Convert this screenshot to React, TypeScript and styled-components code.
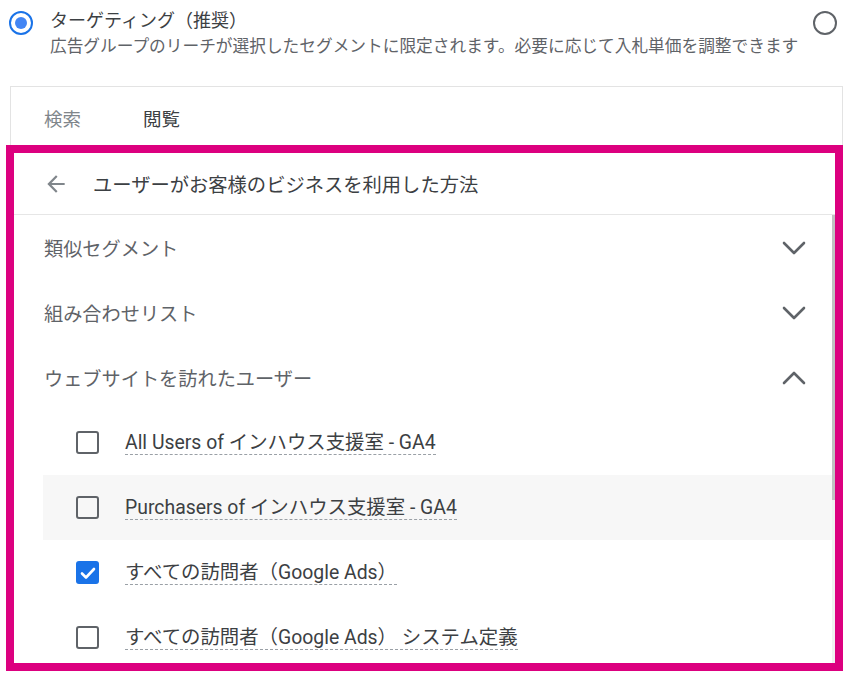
import React from 'react';
import styled, { createGlobalStyle } from 'styled-components';

const GlobalStyle = createGlobalStyle`
    html, body {
        margin: 0;
        padding: 0;
        background: #ffffff;
    }
    body {
        font-family: Roboto, "Noto Sans CJK JP", sans-serif;
        color: #3c4043;
    }
`;

const Page = styled.div`
    width: 850px;
    height: 677px;
    overflow: hidden;
    display: flex;
    flex-direction: column;
`;

const OptionRow = styled.div`
    display: flex;
    align-items: flex-start;
    padding: 10px 13px 0 9px;
    height: 86px;
    flex: none;
    box-sizing: border-box;
`;

const Radio = styled.span<{ checked?: boolean }>`
    flex: none;
    width: 24px;
    height: 24px;
    box-sizing: border-box;
    border-radius: 50%;
    border: 2.5px solid ${({ checked }) => (checked ? '#1a73e8' : '#5f6368')};
    display: flex;
    align-items: center;
    justify-content: center;
    margin-top: 1px;

    &::after {
        content: '';
        width: 12px;
        height: 12px;
        border-radius: 50%;
        background: ${({ checked }) => (checked ? '#4285f4' : 'transparent')};
    }
`;

const OptionText = styled.div`
    flex: 1;
    padding-left: 17px;
`;

const OptionTitle = styled.div`
    font-size: 18px;
    line-height: 22px;
    color: #3c4043;
`;

const OptionDesc = styled.div`
    font-size: 16.7px;
    line-height: 22px;
    margin-top: 4px;
    color: #5f6368;
    white-space: nowrap;
`;

const TabPanel = styled.div`
    flex: none;
    margin-left: 10px;
    width: 833px;
    height: 59px;
    box-sizing: border-box;
    border: 1px solid #e3e3e3;
    border-bottom: none;
    display: flex;
    align-items: center;
    padding: 0 0 0 33px;
    gap: 62px;
`;

const Tab = styled.span<{ active?: boolean }>`
    font-size: 18.5px;
    color: ${({ active }) => (active ? '#3c4043' : '#80868b')};
    padding-top: 3px;
`;

const Highlight = styled.div`
    flex: none;
    margin-left: 6px;
    width: 837px;
    height: 526px;
    box-sizing: border-box;
    border: 8px solid #dc007f;
    display: flex;
    flex-direction: column;
    background: #ffffff;
`;

const Header = styled.div`
    flex: none;
    height: 62px;
    box-sizing: border-box;
    border-bottom: 1px solid #e6e6e6;
    display: flex;
    align-items: center;
    padding-left: 29px;
    gap: 24px;
`;

const HeaderTitle = styled.span`
    font-size: 19.3px;
    color: #3c4043;
`;

const ListArea = styled.div`
    flex: 1;
    display: flex;
    min-height: 0;
`;

const List = styled.div`
    flex: 1;
    overflow: hidden;
`;

const Scrollbar = styled.div`
    flex: none;
    width: 3px;
    background: #f1f1f1;
`;

const Thumb = styled.div`
    height: 285px;
    background: #c1c1c1;
`;

const SectionRow = styled.div`
    height: 65px;
    display: flex;
    align-items: center;
    justify-content: space-between;
    padding: 0 26px 0 30px;
`;

const SectionLabel = styled.span`
    font-size: 19.2px;
    color: #5f6368;
`;

const ItemRow = styled.div<{ hovered?: boolean }>`
    height: 65px;
    margin-left: 29px;
    display: flex;
    align-items: center;
    padding-left: 33px;
    gap: 26px;
    background: ${({ hovered }) => (hovered ? '#f7f7f7' : 'transparent')};
`;

const Checkbox = styled.span<{ checked?: boolean }>`
    flex: none;
    width: 23px;
    height: 23px;
    box-sizing: border-box;
    border-radius: 3px;
    border: ${({ checked }) => (checked ? 'none' : '2.5px solid #5f6368')};
    background: ${({ checked }) => (checked ? '#1a73e8' : 'transparent')};
    display: flex;
    align-items: center;
    justify-content: center;
`;

const ItemLabel = styled.span`
    font-size: 19.4px;
    line-height: 23px;
    color: #3c4043;
    border-bottom: 1px dashed #9aa0a6;
    white-space: nowrap;
`;

const Chevron: React.FC<{ up?: boolean }> = ({ up }) => (
    <svg width="24" height="14" viewBox="0 0 24 14" aria-hidden>
        <polyline
            points={up ? '2,12 12,2 22,12' : '2,2 12,12 22,2'}
            fill="none"
            stroke="#5f6368"
            strokeWidth="2.6"
            strokeLinecap="round"
            strokeLinejoin="round"
        />
    </svg>
);

const BackArrow = () => (
    <svg width="26" height="26" viewBox="0 0 24 24" aria-hidden>
        <path d="M20 11H7.83l5.59-5.59L12 4l-8 8 8 8 1.41-1.41L7.83 13H20v-2z" fill="#80868b" />
    </svg>
);

const CheckMark = () => (
    <svg width="18" height="18" viewBox="0 0 18 18" aria-hidden>
        <polyline
            points="3,9.5 7,13.5 15,5"
            fill="none"
            stroke="#ffffff"
            strokeWidth="2.6"
            strokeLinecap="round"
            strokeLinejoin="round"
        />
    </svg>
);

const SECTIONS = [
    { label: '類似セグメント', open: false },
    { label: '組み合わせリスト', open: false },
    { label: 'ウェブサイトを訪れたユーザー', open: true },
];

const ITEMS = [
    { label: 'All Users of インハウス支援室 - GA4', checked: false },
    { label: 'Purchasers of インハウス支援室 - GA4', checked: false, hovered: true },
    { label: 'すべての訪問者（Google Ads）', checked: true },
    { label: 'すべての訪問者（Google Ads） システム定義', checked: false },
];

const App: React.FC = () => (
    <>
        <GlobalStyle />
        <Page>
            <OptionRow>
                <Radio checked />
                <OptionText>
                    <OptionTitle>ターゲティング（推奨）</OptionTitle>
                    <OptionDesc>
                        広告グループのリーチが選択したセグメントに限定されます。必要に応じて入札単価を調整できます
                    </OptionDesc>
                </OptionText>
                <Radio />
            </OptionRow>

            <TabPanel>
                <Tab>検索</Tab>
                <Tab active>閲覧</Tab>
            </TabPanel>

            <Highlight>
                <Header>
                    <BackArrow />
                    <HeaderTitle>ユーザーがお客様のビジネスを利用した方法</HeaderTitle>
                </Header>
                <ListArea>
                    <List>
                        {SECTIONS.map((section) => (
                            <SectionRow key={section.label}>
                                <SectionLabel>{section.label}</SectionLabel>
                                <Chevron up={section.open} />
                            </SectionRow>
                        ))}
                        {ITEMS.map((item) => (
                            <ItemRow key={item.label} hovered={item.hovered}>
                                <Checkbox checked={item.checked}>{item.checked && <CheckMark />}</Checkbox>
                                <ItemLabel>{item.label}</ItemLabel>
                            </ItemRow>
                        ))}
                    </List>
                    <Scrollbar>
                        <Thumb />
                    </Scrollbar>
                </ListArea>
            </Highlight>
        </Page>
    </>
);

export default App;
